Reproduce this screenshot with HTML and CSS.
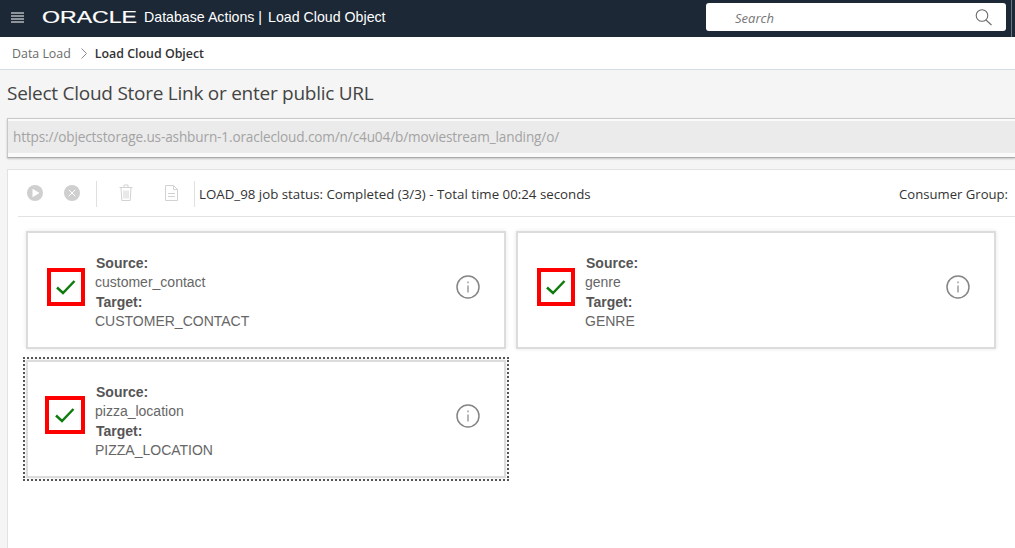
FILE: index.html
```html
<!doctype html>
<html lang="en">
<head>
  <title>Load Cloud Object</title>
  <link rel="stylesheet" href="styles.css">
</head>
<body>
  <header id="top-bar">
    <svg class="burger" width="13" height="11" viewBox="0 0 13 11"><path d="M0 1h13M0 4h13M0 7h13M0 10h13" stroke="#fff" stroke-width="1"/></svg>
    <svg class="logo" width="96" height="17" viewBox="0 0 96 17"><text x="0" y="15" textLength="95" lengthAdjust="spacingAndGlyphs" font-family="Liberation Sans" font-size="16" fill="#fff" stroke="#fff" stroke-width="0.2">ORACLE</text></svg>
    <span class="app-name">Database Actions |</span>
    <span class="page-name">Load Cloud Object</span>
    <div id="search">
      <span>Search</span>
      <svg width="17" height="17" viewBox="0 0 17 17" fill="none" stroke="#6b6b6b" stroke-width="1.1"><circle cx="7" cy="6.500" r="5.800"/><path d="M11 11l5.500 5"/></svg>
    </div>
    <i class="edge"></i>
  </header>
  <nav id="crumbs">
    <a href="#">Data Load</a>
    <svg width="6" height="11" viewBox="0 0 6 11" fill="none" stroke="#8a8a8a"><path d="M.5 .5l5 5-5 5"/></svg>
    <b>Load Cloud Object</b>
  </nav>
  <main id="content">
    <h1>Select Cloud Store Link or enter public URL</h1>
    <div id="url-box">
      <div>https://objectstorage.us-ashburn-1.oraclecloud.com/n/c4u04/b/moviestream_landing/o/</div>
    </div>
    <section id="job">
      <div id="toolbar">
        <svg class="tool" width="18" height="18" viewBox="0 0 18 18"><circle cx="9" cy="9" r="8" fill="#cfcfcf"/><path d="M6.500 4.800v8.400L13.500 9z" fill="#fff"/></svg>
        <svg class="tool" width="18" height="18" viewBox="0 0 18 18"><circle cx="9" cy="9" r="8" fill="#cfcfcf"/><path d="M5.800 5.800l6.400 6.400M12.200 5.800l-6.400 6.400" stroke="#fff"/></svg>
        <i class="sep"></i>
        <svg class="tool trash" width="14" height="17" viewBox="0 0 14 17" fill="none" stroke="#d2d2d2"><path d="M.5 3.500h13M5 3V1h4v2M2 4l.8 12.500h8.400L12 4M5 6.500v8M7 6.500v8M9 6.500v8"/></svg>
        <svg class="tool doc" width="13" height="16" viewBox="0 0 13 16" fill="none" stroke="#d2d2d2"><path d="M.5 .5h8l4 4v11H.5zM8.500 .5v4h4M3 8.500h7M3 11.500h7"/></svg>
        <i class="sep"></i>
        <span class="status">LOAD_98 job status: Completed (3/3) - Total time 00:24 seconds</span>
        <span class="consumer">Consumer Group:</span>
      </div>
      <div id="cards">
        <div class="card">
          <div class="check">
            <svg width="20" height="15" viewBox="0 0 20 15" fill="none" stroke="#107c10" stroke-width="2.500"><path d="M1 7.500l6 5.500L18.500 1"/></svg>
          </div>
          <div class="names">
            <b>Source:</b>
            <span>customer_contact</span>
            <b>Target:</b>
            <span>CUSTOMER_CONTACT</span>
          </div>
          <svg class="info" width="24" height="24" viewBox="0 0 24 24" fill="none" stroke="#858585"><circle cx="12" cy="12" r="11" stroke-width="1.500"/><path d="M12 10.500v7M12 6.500v1.800" stroke-width="1.200"/></svg>
        </div>
        <div class="card">
          <div class="check">
            <svg width="20" height="15" viewBox="0 0 20 15" fill="none" stroke="#107c10" stroke-width="2.500"><path d="M1 7.500l6 5.500L18.500 1"/></svg>
          </div>
          <div class="names">
            <b>Source:</b>
            <span>genre</span>
            <b>Target:</b>
            <span>GENRE</span>
          </div>
          <svg class="info" width="24" height="24" viewBox="0 0 24 24" fill="none" stroke="#858585"><circle cx="12" cy="12" r="11" stroke-width="1.500"/><path d="M12 10.500v7M12 6.500v1.800" stroke-width="1.200"/></svg>
        </div>
        <div class="card focused">
          <div class="check">
            <svg width="20" height="15" viewBox="0 0 20 15" fill="none" stroke="#107c10" stroke-width="2.500"><path d="M1 7.500l6 5.500L18.500 1"/></svg>
          </div>
          <div class="names">
            <b>Source:</b>
            <span>pizza_location</span>
            <b>Target:</b>
            <span>PIZZA_LOCATION</span>
          </div>
          <svg class="info" width="24" height="24" viewBox="0 0 24 24" fill="none" stroke="#858585"><circle cx="12" cy="12" r="11" stroke-width="1.500"/><path d="M12 10.500v7M12 6.500v1.800" stroke-width="1.200"/></svg>
        </div>
      </div>
    </section>
  </main>
</body>
</html>
```

FILE: styles.css
```css
html, body {
  margin: 0;
  padding: 0;
  height: 100%;
  overflow: hidden;
  background: #f5f5f5;
  font-family: "Open Sans", "Noto Sans", sans-serif;
}
#top-bar {
  height: 37px;
  box-sizing: border-box;
  display: flex;
  align-items: center;
  padding: 0 3px 4px 11px;
  background: #1c2835;
  color: #fff;
  font-family: "Liberation Sans", sans-serif;
  font-size: 14.200px;
  white-space: nowrap;
}
.burger {
  flex: none;
  margin-top: 1px;
}
.logo {
  margin-left: 18px;
  flex: none;
}
.app-name {
  margin-left: 6px;
}
.page-name {
  margin-left: 6px;
}
#search {
  margin-left: auto;
  margin-top: 1px;
  width: 300px;
  height: 28px;
  box-sizing: border-box;
  padding: 1px 14px 0 29px;
  display: flex;
  align-items: center;
  justify-content: space-between;
  background: #fff;
  border-radius: 3px;
  color: #767676;
  font-family: "Open Sans", sans-serif;
  font-size: 13px;
  font-style: italic;
}
.edge {
  flex: none;
  align-self: stretch;
  width: 1px;
  margin: 0 0 -4px 5px;
  background: #6b7580;
}
#crumbs {
  height: 33px;
  box-sizing: border-box;
  display: flex;
  align-items: center;
  padding-left: 12px;
  background: #fff;
  border-bottom: 1px solid #d6dce4;
  font-size: 12.400px;
}
#crumbs a {
  color: #6b6b6b;
  text-decoration: none;
}
#crumbs svg {
  margin: 0 8px 0 10px;
}
#crumbs b {
  color: #333;
  font-weight: 600;
}
#content {
  padding-left: 7px;
}
h1 {
  margin: 0;
  padding-top: 9px;
  height: 39px;
  font-size: 19px;
  letter-spacing: -0.260px;
  line-height: 28px;
  font-weight: 400;
  color: #444;
  white-space: nowrap;
}
#url-box {
  height: 40px;
  box-sizing: border-box;
  padding-top: 2px;
  background: #fafafa;
  border: 1px solid #c8c8c8;
  border-right: none;
  border-bottom-color: #aaa;
  box-shadow: 0 1px 2px rgba(0, 0, 0, 0.2);
}
#url-box div {
  height: 32px;
  line-height: 32px;
  padding-left: 5px;
  background: #ebebeb;
  color: #a3a3a3;
  font-size: 13.600px;
  letter-spacing: -0.140px;
  white-space: nowrap;
}
#job {
  margin-top: 11px;
  height: 400px;
  background: #fff;
  border: 1px solid #e2e2e2;
  border-right: none;
}
#toolbar {
  height: 45px;
  padding-top: 1px;
  margin-left: 10px;
  display: flex;
  align-items: center;
  border-bottom: 1px solid #e2e2e2;
  font-size: 13.300px;
  color: #333;
  white-space: nowrap;
}
.tool {
  flex: none;
  margin-left: 8px;
  margin-right: 11px;
  margin-bottom: 2px;
}
.tool.trash {
  margin-left: 18px;
  margin-right: 0;
}
.tool.doc {
  margin-left: 32px;
  margin-right: 12px;
}
.sep {
  flex: none;
  width: 1px;
  height: 26px;
  background: #e0e0e0;
  margin-left: 4px;
  margin-right: 4px;
}
.consumer {
  margin-left: auto;
  margin-right: 7px;
  font-size: 13.100px;
}
#cards {
  display: flex;
  flex-wrap: wrap;
  gap: 11px 10px;
  padding: 14px 0 0 18px;
  width: 980px;
}
.card {
  width: 480px;
  height: 118px;
  box-sizing: border-box;
  display: flex;
  align-items: center;
  padding: 0 24px 6px 19px;
  border: 2px solid #dcdcdc;
  background: #fff;
  box-shadow: 0 0 4px rgba(0, 0, 0, 0.1);
  font-family: "Liberation Sans", sans-serif;
  font-size: 14px;
  color: #666;
}
.check {
  flex: none;
  width: 38px;
  height: 38px;
  box-sizing: border-box;
  display: flex;
  align-items: center;
  justify-content: center;
  border: 4px solid #f00;
}
.names {
  flex: 1;
  display: flex;
  flex-direction: column;
  margin-left: 10px;
  margin-top: 11px;
  line-height: 19.500px;
}
.names b {
  color: #555;
  margin-left: 1px;
}
.info {
  flex: none;
}
.focused {
  outline: 2px dotted #555;
  outline-offset: 1px;
}
.focused .check {
  width: 40px;
  margin-left: -2px;
  margin-bottom: 2px;
}
```
